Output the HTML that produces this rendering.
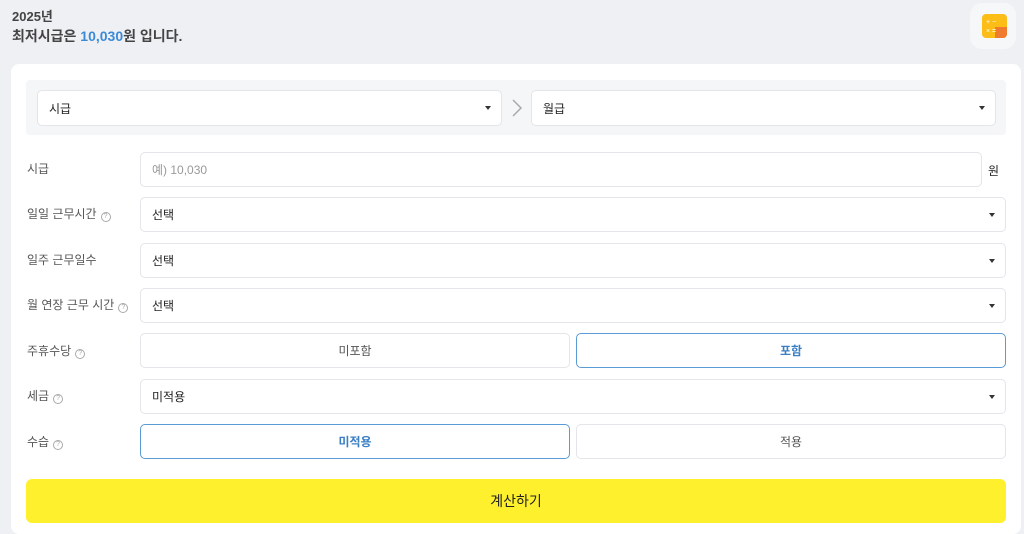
<!DOCTYPE html><html><head><meta charset="utf-8"><style>
*{box-sizing:border-box;margin:0;padding:0}
body{width:1024px;height:529px;background:#eef0f4;font-family:"Liberation Sans","Noto Sans CJK KR",sans-serif;position:relative;overflow:hidden;color:#222}
.a{position:absolute}
.box{position:absolute;background:#fff;border:1px solid #e3e5e9;border-radius:5px;font-size:12px;display:flex;align-items:center;padding-left:11px}
.sel::after{content:"";position:absolute;right:10px;top:50%;margin-top:-2px;border:3.5px solid transparent;border-top:4px solid #333;border-bottom:0}
.lbl{position:absolute;left:27px;font-size:12px;color:#555;line-height:14px}
.q{display:inline-block;width:10px;height:10px;border:1px solid #aaa;border-radius:50%;font-size:7px;color:#aaa;text-align:center;line-height:8px;margin-left:4px;vertical-align:0}
.tg{justify-content:center;padding:0;color:#555}
.on{border-color:#5b9bd5;color:#3a7fc4;font-weight:bold}
</style></head><body>
<div class="a" style="left:12px;top:6px;font-size:13px;font-weight:bold;color:#444">2025년</div>
<div class="a" style="left:12px;top:26px;font-size:14px;font-weight:bold;color:#444">최저시급은 <span style="color:#3b8ad8">10,030</span>원 입니다.</div>
<div class="a" style="left:970px;top:3px;width:46px;height:46px;border-radius:12px;background:#f6f7f9"></div>
<div class="a" style="left:982px;top:14px;width:25px;height:24px;border-radius:4px;background:#fbbd16"></div>
<div class="a" style="left:995px;top:27px;width:12px;height:11px;border-radius:0 0 4px 0;background:#ef7b2e"></div>
<div class="a" style="left:986px;top:18px;color:#fff;font-size:7px;line-height:9px">+ −<br>× =</div>
<div class="a" style="left:11px;top:64px;width:1010px;height:470px;background:#fff;border-radius:8px"></div>
<div class="a" style="left:26px;top:80px;width:980px;height:55px;background:#f5f6f8;border-radius:4px"></div>
<div class="box sel" style="left:37px;top:90px;width:465px;height:36px">시급</div>
<svg class="a" style="left:510px;top:98px" width="14" height="20"><path d="M3 2l8 8-8 8" fill="none" stroke="#aaa" stroke-width="1.5"/></svg>
<div class="box sel" style="left:531px;top:90px;width:465px;height:36px">월급</div>
<div class="lbl" style="top:162px">시급</div>
<div class="box" style="left:140px;top:152px;width:842px;height:35px;color:#999">예) 10,030</div>
<div class="a" style="left:988px;top:162px;font-size:12px">원</div>
<div class="lbl" style="top:207px">일일 근무시간<span class="q">?</span></div>
<div class="box sel" style="left:140px;top:197px;width:866px;height:35px">선택</div>
<div class="lbl" style="top:253px">일주 근무일수</div>
<div class="box sel" style="left:140px;top:243px;width:866px;height:35px">선택</div>
<div class="lbl" style="top:298px">월 연장 근무 시간<span class="q">?</span></div>
<div class="box sel" style="left:140px;top:288px;width:866px;height:35px">선택</div>
<div class="lbl" style="top:344px">주휴수당<span class="q">?</span></div>
<div class="box tg" style="left:140px;top:333px;width:430px;height:35px">미포함</div>
<div class="box tg on" style="left:576px;top:333px;width:430px;height:35px">포함</div>
<div class="lbl" style="top:389px">세금<span class="q">?</span></div>
<div class="box sel" style="left:140px;top:379px;width:866px;height:35px">미적용</div>
<div class="lbl" style="top:435px">수습<span class="q">?</span></div>
<div class="box tg on" style="left:140px;top:424px;width:430px;height:35px">미적용</div>
<div class="box tg" style="left:576px;top:424px;width:430px;height:35px">적용</div>
<div class="a" style="left:26px;top:479px;width:980px;height:44px;background:#fff02e;border-radius:6px;display:flex;align-items:center;justify-content:center;font-size:14px;color:#222">계산하기</div>
</body></html>
